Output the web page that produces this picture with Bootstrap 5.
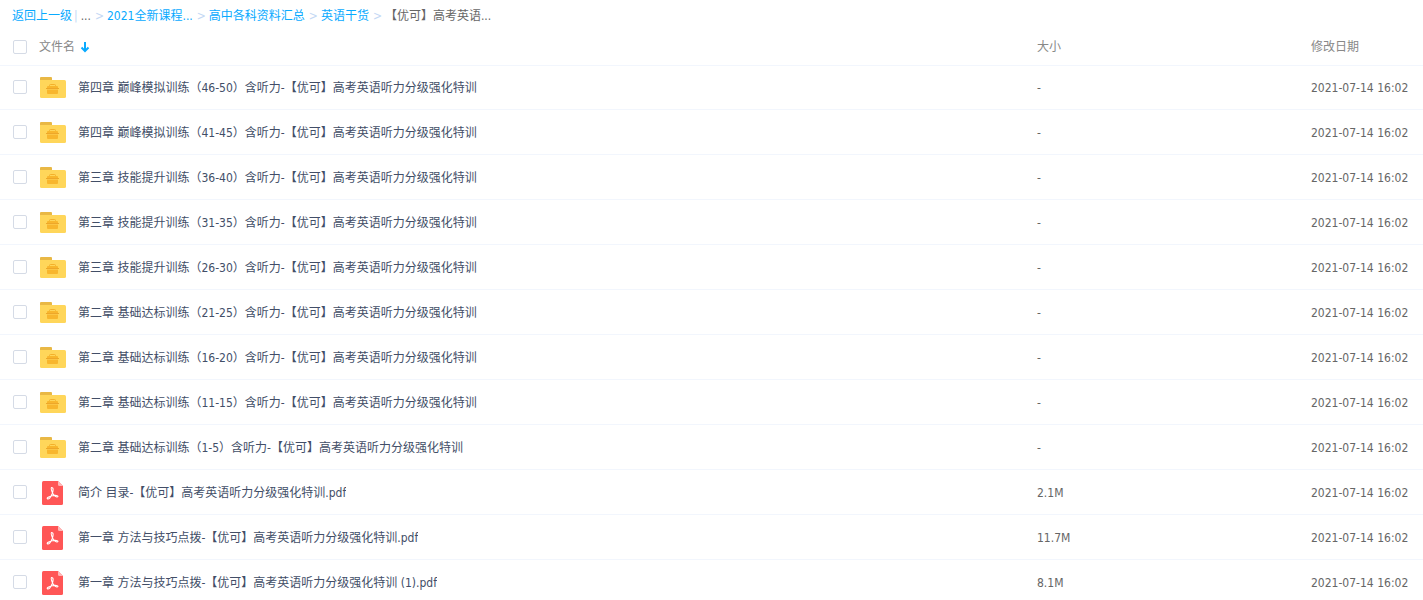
<!DOCTYPE html>
<html lang="zh-CN">
<head>
<meta charset="utf-8">
<meta name="viewport" content="width=device-width, initial-scale=1">
<title>文件列表</title>
<link href="https://cdn.jsdelivr.net/npm/bootstrap@5.3.0/dist/css/bootstrap.min.css" rel="stylesheet">
<style>
  body { font-family: "DejaVu Sans Condensed", "Noto Sans CJK SC", sans-serif; font-size: 12px; line-height: 16px; color: #666; background: #fff; }
  a { color: #09aaff; text-decoration: none; }
  .path-bar { height: 32px; padding: 0 12px; white-space: nowrap; }
  .path-bar .sep { color: #c4d8f4; margin: 0 3px 0 4px; }
  .path-bar .bar { color: #c4d8f4; margin: 0 3px 0 2px; }
  .file-table { table-layout: fixed; color: #666; margin: 0; }
  .file-table > :not(caption) > * > * { padding: 0; height: 45px; border-bottom: 1px solid #f2f6fd; background: transparent; color: inherit; }
  .file-table > thead > tr > th { height: 33px; color: #888; font-weight: 400; vertical-align: middle; padding-bottom: 3px; }
  .file-table > tbody > tr:first-child > td { height: 44px; }
  .file-table > tbody > tr > td + td { padding-top: 2px; }
  .col-size { width: 274px; }
  .col-date { width: 112px; }
  .name-cell { padding-left: 13px; }
  .name-cell .form-check-input { width: 14px; height: 14px; margin: 0; border: 1px solid #d5dbe6; border-radius: 2px; flex: none; }
  .name-cell svg { flex: none; }
  .name-cell a { color: #424e67; margin-left: 12px; padding-top: 2px; }
  .name-cell .pick { margin-right: 13px; }
  .name-cell .pick-all { margin-right: 12px; }
  .sort-btn { border: 0; background: none; padding: 0; color: inherit; }
</style>
</head>
<body>
<svg class="d-none" aria-hidden="true">
  <symbol id="folder" viewBox="0 0 26 22">
    <path d="M0 8V2Q0 1 1 1H11Q12 1 12 2V4.500L13 8Z" fill="#e9b845"/>
    <path d="M0 4H24.500Q26 4 26 5.500V20.500Q26 22 24.500 22H1.500Q0 22 0 20.500Z" fill="#ffd65a"/>
    <path d="M9.500 11V9.500Q9.500 8.500 10.500 8.500H14.500Q15.500 8.500 15.500 9.500V11" fill="none" stroke="#f3b02c"/>
    <path d="M8 10H17Q18 10 18 11V17Q18 18 17 18H8Q7 18 7 17V11Q7 10 8 10Z" fill="#f8b62d"/>
    <path d="M6 12H19V13H6Z" fill="#eda72a"/>
    <path d="M7 13H18V14H7Z" fill="#fcc544"/>
  </symbol>
  <symbol id="pdf" viewBox="0 -2 26 26">
    <path d="M3.500 0H18L23 5V22.500Q23 24 21.500 24H3.500Q2 24 2 22.500V1.500Q2 0 3.500 0Z" fill="#ff5656"/>
    <path d="M18 0L23 5H19.500Q18 5 18 3.500Z" fill="#ffb8b8"/>
    <path d="M11.500 6.500C14 6.500 13 10.500 12.300 12.500C11.200 15 9.500 18.500 7.600 18C6 17.300 9.200 15.300 12.300 14.700C15 14.200 18.400 14.300 17.900 15.600C17.200 17 13.600 14.600 12.600 12.200C11.700 9.900 10.500 7 11.500 6.500Z" fill="none" stroke="#fff" stroke-width="1.100"/>
  </symbol>
</svg>

<main class="vh-100 overflow-hidden">
  <nav class="path-bar d-flex align-items-center" aria-label="路径">
    <a href="#">返回上一级</a><span class="bar">|</span><a href="#" class="text-reset">...</a>
    <span class="sep">&gt;</span><a href="#">2021全新课程...</a>
    <span class="sep">&gt;</span><a href="#">高中各科资料汇总</a>
    <span class="sep">&gt;</span><a href="#">英语干货</a>
    <span class="sep">&gt;</span><span>【优可】高考英语...</span>
  </nav>

  <table class="table file-table align-middle w-100">
    <thead>
      <tr>
        <th scope="col"><div class="name-cell d-flex align-items-center"><input class="form-check-input pick-all" type="checkbox" aria-label="全选"><button type="button" class="sort-btn d-flex align-items-center gap-1">文件名
          <svg width="12" height="12" viewBox="0 0 12 12" aria-hidden="true"><path d="M6 1V10M2.500 6.500L6 10L9.500 6.500" fill="none" stroke="#09aaff" stroke-width="2"/></svg></button></div></th>
        <th scope="col" class="col-size">大小</th>
        <th scope="col" class="col-date">修改日期</th>
      </tr>
    </thead>
    <tbody>
      <tr><td><div class="name-cell d-flex align-items-center"><input class="form-check-input pick" type="checkbox" aria-labelledby="f1"><svg width="26" height="22"><use href="#folder"/></svg><a id="f1" href="#" class="text-truncate">第四章 巅峰模拟训练（46-50）含听力-【优可】高考英语听力分级强化特训</a></div></td><td>-</td><td>2021-07-14 16:02</td></tr>
      <tr><td><div class="name-cell d-flex align-items-center"><input class="form-check-input pick" type="checkbox" aria-labelledby="f2"><svg width="26" height="22"><use href="#folder"/></svg><a id="f2" href="#" class="text-truncate">第四章 巅峰模拟训练（41-45）含听力-【优可】高考英语听力分级强化特训</a></div></td><td>-</td><td>2021-07-14 16:02</td></tr>
      <tr><td><div class="name-cell d-flex align-items-center"><input class="form-check-input pick" type="checkbox" aria-labelledby="f3"><svg width="26" height="22"><use href="#folder"/></svg><a id="f3" href="#" class="text-truncate">第三章 技能提升训练（36-40）含听力-【优可】高考英语听力分级强化特训</a></div></td><td>-</td><td>2021-07-14 16:02</td></tr>
      <tr><td><div class="name-cell d-flex align-items-center"><input class="form-check-input pick" type="checkbox" aria-labelledby="f4"><svg width="26" height="22"><use href="#folder"/></svg><a id="f4" href="#" class="text-truncate">第三章 技能提升训练（31-35）含听力-【优可】高考英语听力分级强化特训</a></div></td><td>-</td><td>2021-07-14 16:02</td></tr>
      <tr><td><div class="name-cell d-flex align-items-center"><input class="form-check-input pick" type="checkbox" aria-labelledby="f5"><svg width="26" height="22"><use href="#folder"/></svg><a id="f5" href="#" class="text-truncate">第三章 技能提升训练（26-30）含听力-【优可】高考英语听力分级强化特训</a></div></td><td>-</td><td>2021-07-14 16:02</td></tr>
      <tr><td><div class="name-cell d-flex align-items-center"><input class="form-check-input pick" type="checkbox" aria-labelledby="f6"><svg width="26" height="22"><use href="#folder"/></svg><a id="f6" href="#" class="text-truncate">第二章 基础达标训练（21-25）含听力-【优可】高考英语听力分级强化特训</a></div></td><td>-</td><td>2021-07-14 16:02</td></tr>
      <tr><td><div class="name-cell d-flex align-items-center"><input class="form-check-input pick" type="checkbox" aria-labelledby="f7"><svg width="26" height="22"><use href="#folder"/></svg><a id="f7" href="#" class="text-truncate">第二章 基础达标训练（16-20）含听力-【优可】高考英语听力分级强化特训</a></div></td><td>-</td><td>2021-07-14 16:02</td></tr>
      <tr><td><div class="name-cell d-flex align-items-center"><input class="form-check-input pick" type="checkbox" aria-labelledby="f8"><svg width="26" height="22"><use href="#folder"/></svg><a id="f8" href="#" class="text-truncate">第二章 基础达标训练（11-15）含听力-【优可】高考英语听力分级强化特训</a></div></td><td>-</td><td>2021-07-14 16:02</td></tr>
      <tr><td><div class="name-cell d-flex align-items-center"><input class="form-check-input pick" type="checkbox" aria-labelledby="f9"><svg width="26" height="22"><use href="#folder"/></svg><a id="f9" href="#" class="text-truncate">第二章 基础达标训练（1-5）含听力-【优可】高考英语听力分级强化特训</a></div></td><td>-</td><td>2021-07-14 16:02</td></tr>
      <tr><td><div class="name-cell d-flex align-items-center"><input class="form-check-input pick" type="checkbox" aria-labelledby="f10"><svg width="26" height="26"><use href="#pdf"/></svg><a id="f10" href="#" class="text-truncate">简介 目录-【优可】高考英语听力分级强化特训.pdf</a></div></td><td>2.1M</td><td>2021-07-14 16:02</td></tr>
      <tr><td><div class="name-cell d-flex align-items-center"><input class="form-check-input pick" type="checkbox" aria-labelledby="f11"><svg width="26" height="26"><use href="#pdf"/></svg><a id="f11" href="#" class="text-truncate">第一章 方法与技巧点拨-【优可】高考英语听力分级强化特训.pdf</a></div></td><td>11.7M</td><td>2021-07-14 16:02</td></tr>
      <tr><td><div class="name-cell d-flex align-items-center"><input class="form-check-input pick" type="checkbox" aria-labelledby="f12"><svg width="26" height="26"><use href="#pdf"/></svg><a id="f12" href="#" class="text-truncate">第一章 方法与技巧点拨-【优可】高考英语听力分级强化特训 (1).pdf</a></div></td><td>8.1M</td><td>2021-07-14 16:02</td></tr>
    </tbody>
  </table>
</main>
<script src="https://cdn.jsdelivr.net/npm/bootstrap@5.3.0/dist/js/bootstrap.bundle.min.js"></script>
</body>
</html>
